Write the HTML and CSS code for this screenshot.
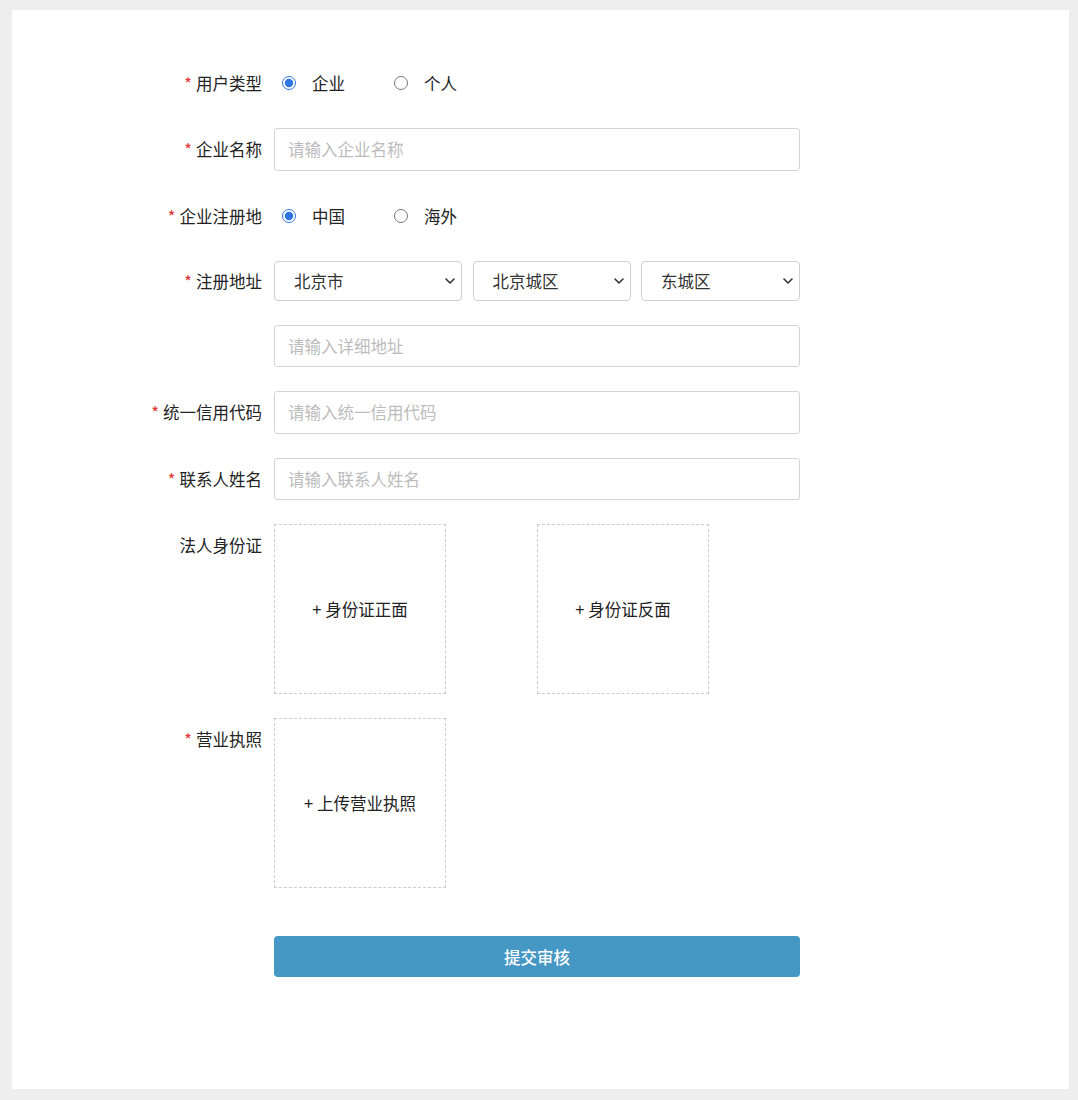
FILE: index.html
```html
<!DOCTYPE html>
<html lang="zh-CN">
<head>
<meta charset="utf-8">
<title>企业认证</title>
<link rel="stylesheet" href="styles.css">
</head>
<body>
<div class="card">
  <form class="form">
    <div class="row">
      <div class="label"><span class="req">*</span>用户类型</div>
      <div class="control radios">
        <label class="opt"><input type="radio" name="utype" checked><span>企业</span></label>
        <label class="opt"><input type="radio" name="utype"><span>个人</span></label>
      </div>
    </div>
    <div class="row">
      <div class="label"><span class="req">*</span>企业名称</div>
      <div class="control"><input class="text" type="text" placeholder="请输入企业名称"></div>
    </div>
    <div class="row">
      <div class="label"><span class="req">*</span>企业注册地</div>
      <div class="control radios">
        <label class="opt"><input type="radio" name="region" checked><span>中国</span></label>
        <label class="opt"><input type="radio" name="region"><span>海外</span></label>
      </div>
    </div>
    <div class="row">
      <div class="label short"><span class="req">*</span>注册地址</div>
      <div class="control selects">
        <div class="sel s1"><select><option>北京市</option></select><svg class="chev" viewBox="0 0 10 6" width="10" height="6"><path d="M1 1l4 4 4-4" fill="none" stroke="#333" stroke-width="1.6" stroke-linecap="round" stroke-linejoin="round"/></svg></div>
        <div class="sel s2"><select><option>北京城区</option></select><svg class="chev" viewBox="0 0 10 6" width="10" height="6"><path d="M1 1l4 4 4-4" fill="none" stroke="#333" stroke-width="1.6" stroke-linecap="round" stroke-linejoin="round"/></svg></div>
        <div class="sel s3"><select><option>东城区</option></select><svg class="chev" viewBox="0 0 10 6" width="10" height="6"><path d="M1 1l4 4 4-4" fill="none" stroke="#333" stroke-width="1.6" stroke-linecap="round" stroke-linejoin="round"/></svg></div>
      </div>
    </div>
    <div class="row">
      <div class="label"></div>
      <div class="control"><input class="text" type="text" placeholder="请输入详细地址"></div>
    </div>
    <div class="row">
      <div class="label"><span class="req">*</span>统一信用代码</div>
      <div class="control"><input class="text" type="text" placeholder="请输入统一信用代码"></div>
    </div>
    <div class="row">
      <div class="label"><span class="req">*</span>联系人姓名</div>
      <div class="control"><input class="text" type="text" placeholder="请输入联系人姓名"></div>
    </div>
    <div class="row">
      <div class="label">法人身份证</div>
      <div class="control uploads">
        <div class="upload">+ 身份证正面</div>
        <div class="upload">+ 身份证反面</div>
      </div>
    </div>
    <div class="row">
      <div class="label"><span class="req">*</span>营业执照</div>
      <div class="control uploads">
        <div class="upload">+ 上传营业执照</div>
      </div>
    </div>
    <div class="row submit-row">
      <div class="label"></div>
      <div class="control"><button type="button" class="submit">提交审核</button></div>
    </div>
  </form>
</div>
</body>
</html>
```
FILE: styles.css
```css
* { box-sizing: border-box; }
html, body { margin: 0; }
body {
  background: #eeeeee;
  padding: 10px 9px 11px 12px;
  font-family: "Noto Sans CJK SC", "Noto Sans", "Liberation Sans", sans-serif;
  color: #222;
  font-size: 16.5px;
}
.card {
  background: #fff;
  height: 1079px;
  padding-top: 52px;
}
.form {
  margin-left: 100px;
  display: flex;
  flex-direction: column;
  gap: 24px;
}
.row {
  display: flex;
  align-items: flex-start;
}
.label {
  width: 150px;
  height: 42px;
  margin-right: 12px;
  text-align: right;
  line-height: 42px;
  font-size: 16.5px;
  white-space: nowrap;
}
.label.short { line-height: 40px; height: 40px; }
.req {
  color: #e0302f;
  margin-right: 4px;
}
.control {
  width: 526px;
}
.radios {
  display: flex;
  align-items: center;
  height: 42px;
}
.opt {
  display: flex;
  align-items: center;
  width: 112px;
  cursor: pointer;
}
.opt input {
  margin: 0 16px 0 8px;
  width: 14px;
  height: 14px;
  accent-color: #2f74e6;
}
.opt span { line-height: 20px; }
.text {
  width: 100%;
  height: 42.6px;
  border: 1px solid #d4d4d4;
  border-radius: 3px;
  padding: 0 13px;
  font-family: inherit;
  font-size: 16.5px;
  color: #222;
  outline: none;
}
.text::placeholder { color: #bcbcbc; }
.selects {
  display: flex;
  gap: 10.5px;
}
.sel {
  position: relative;
  height: 40px;
}
.s1 { width: 188px; }
.s2 { width: 158px; }
.s3 { width: 159px; }
.sel select {
  appearance: none;
  -webkit-appearance: none;
  width: 100%;
  height: 40px;
  border: 1px solid #cfcfcf;
  border-radius: 4px;
  background: #fff;
  padding: 0 30px 0 19px;
  font-family: inherit;
  font-size: 16.5px;
  color: #333;
  outline: none;
}
.chev {
  position: absolute;
  right: 7px;
  top: 17px;
  pointer-events: none;
}
.uploads {
  display: flex;
  gap: 91px;
}
.upload {
  width: 172px;
  height: 170px;
  border: 1px dashed #cccccc;
  display: flex;
  align-items: center;
  justify-content: center;
  font-size: 16.5px;
  color: #222;
}
.submit-row { margin-top: 24px; }
.submit {
  width: 100%;
  height: 41px;
  border: none;
  border-radius: 4px;
  background: #4597c4;
  color: #fff;
  font-family: inherit;
  font-size: 16.5px;
  font-weight: 500;
  cursor: pointer;
}
```
